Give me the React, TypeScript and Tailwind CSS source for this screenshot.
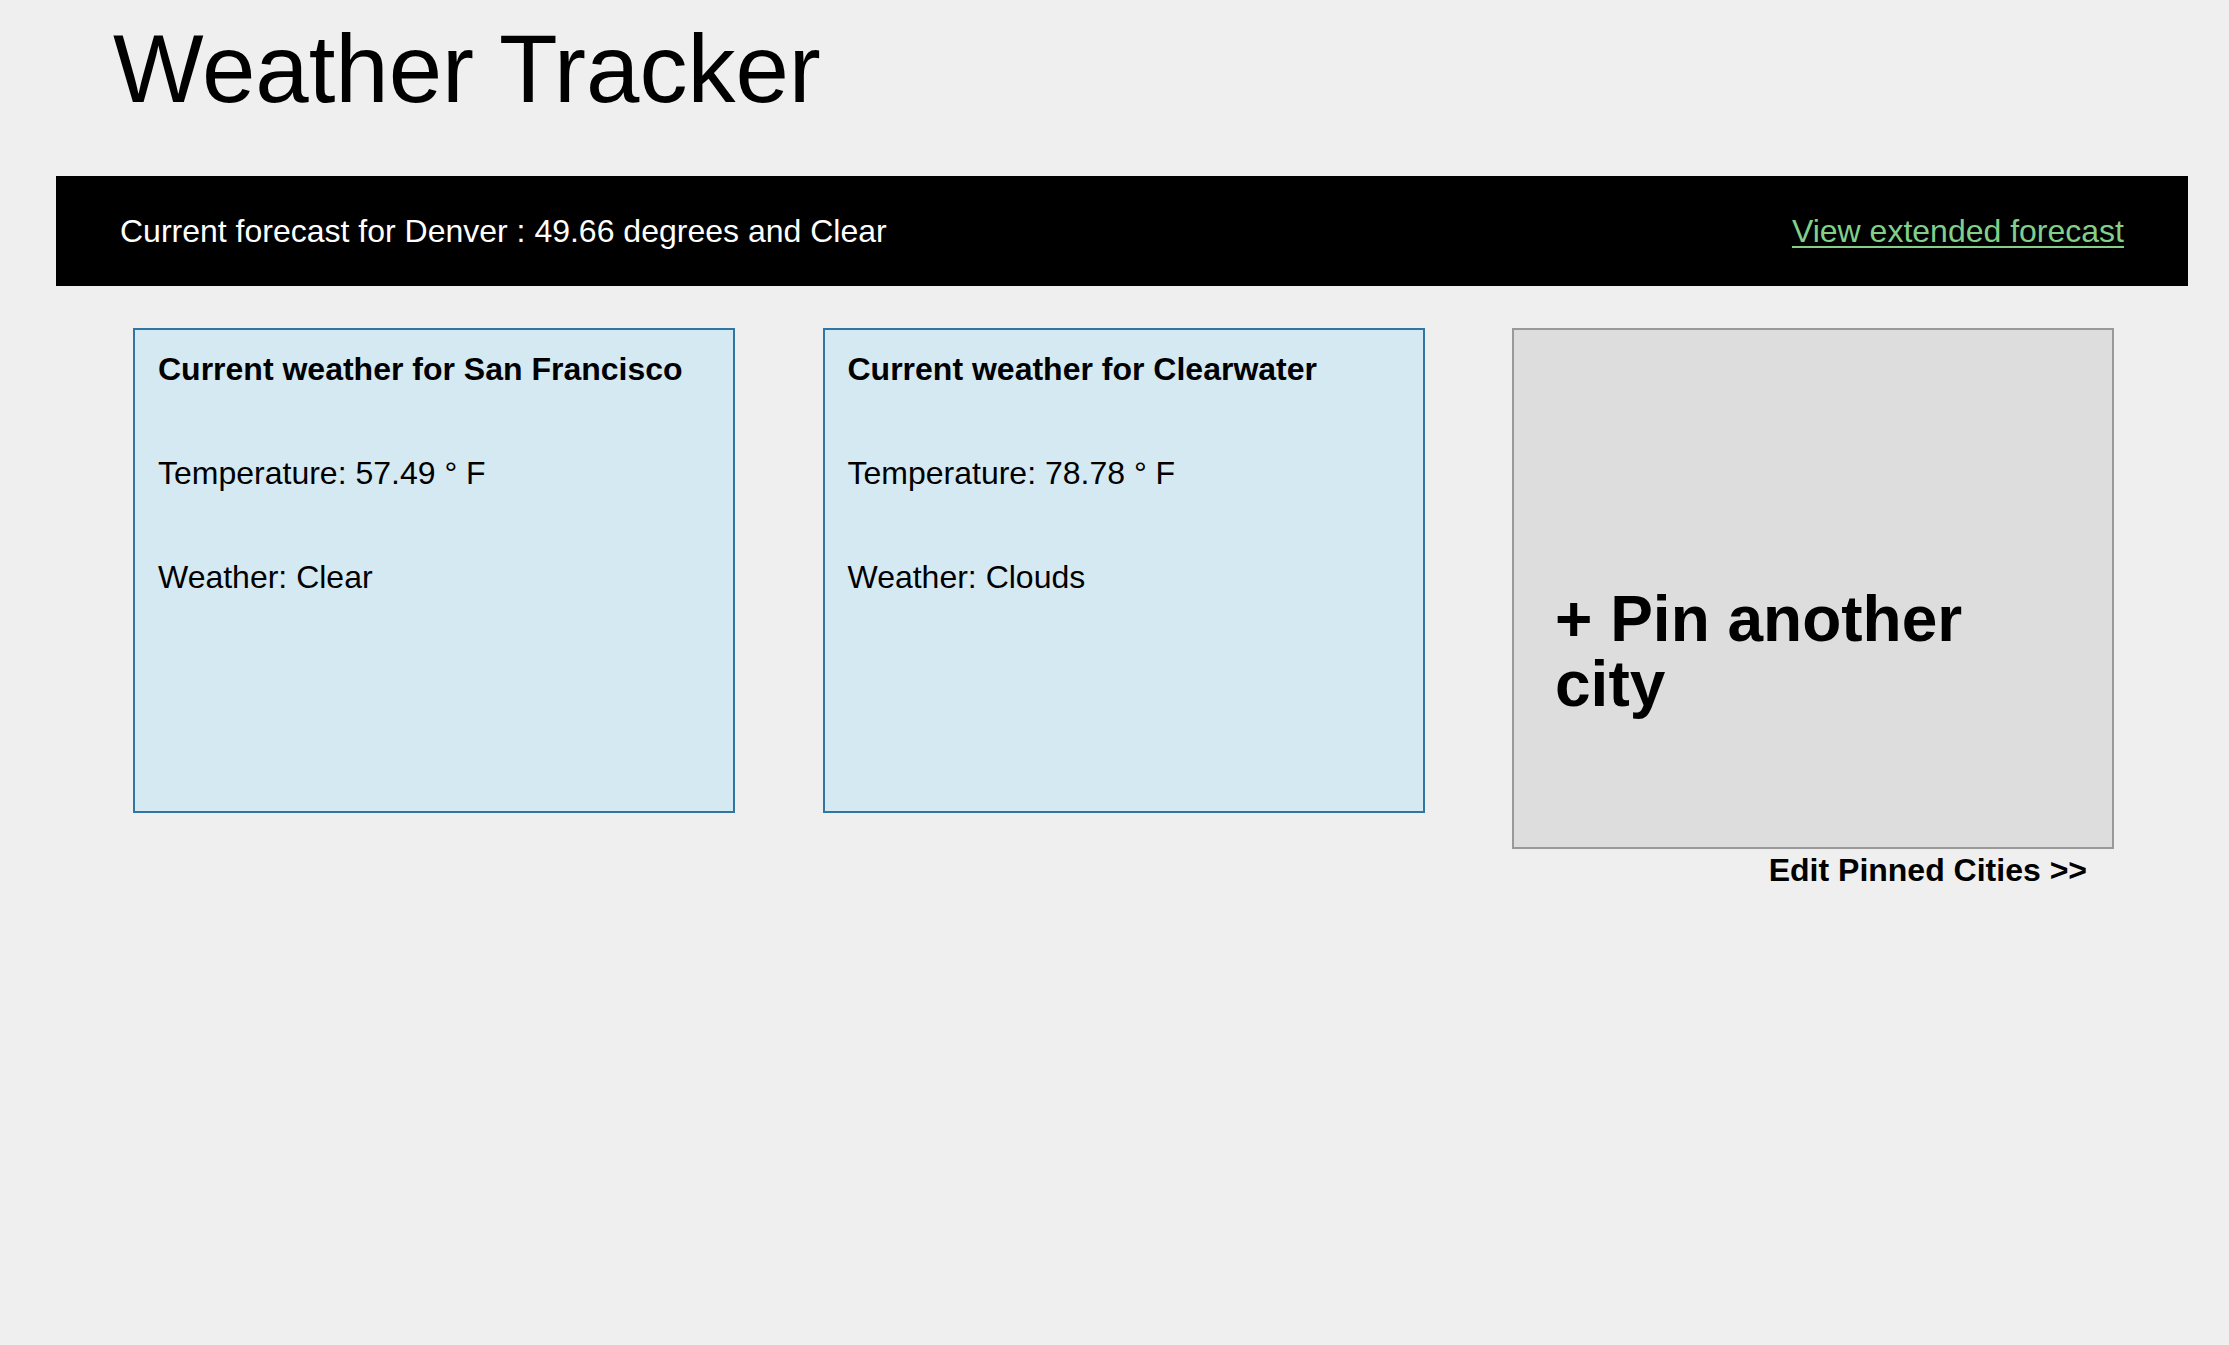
const pinned = [
    {
        city: 'San Francisco',
        temperature: '57.49',
        weather: 'Clear',
    },
    {
        city: 'Clearwater',
        temperature: '78.78',
        weather: 'Clouds',
    },
];

function CityCard({ city, temperature, weather }: (typeof pinned)[number]) {
    return (
        <div className="flex h-[485px] w-[602px] shrink-0 flex-col gap-[68px] border-2 border-[#2f77a2] bg-[#d5e9f2] px-[23px] pt-[21px] text-[32px] leading-[36px] text-black">
            <h3 className="font-bold">Current weather for {city}</h3>
            <p>Temperature: {temperature} ° F</p>
            <p>Weather: {weather}</p>
        </div>
    );
}

export default function App() {
    return (
        <div className="min-h-screen bg-[#efefef] pb-10 font-['Liberation_Sans',Arial,sans-serif] text-black">
            <h1 className="pl-[113px] pt-[21px] text-[96px] font-normal leading-none">
                Weather Tracker
            </h1>

            <div className="ml-[56px] mt-[59px] flex h-[110px] w-[2132px] items-center justify-between bg-black px-16 text-[32px] leading-[36px]">
                <span className="text-white">
                    Current forecast for Denver : 49.66 degrees and Clear
                </span>
                <a
                    href="#"
                    className="text-[#82cf8a] underline decoration-[2px] underline-offset-[4px]"
                >
                    View extended forecast
                </a>
            </div>

            <div className="mt-[42px] flex items-start gap-[87.5px] pl-[133px]">
                {pinned.map((item) => (
                    <CityCard key={item.city} {...item} />
                ))}

                <div className="flex w-[602px] shrink-0 flex-col items-end">
                    <div className="h-[521px] w-full cursor-pointer border-2 border-[#999999] bg-[#dddddd] px-[41px] pt-[257px] text-[64px] font-bold leading-[65px] text-black">
                        + Pin another city
                    </div>
                    <a
                        href="#"
                        className="mt-[3px] pr-[27px] text-[32px] font-bold leading-[36px] text-black"
                    >
                        Edit Pinned Cities &gt;&gt;
                    </a>
                </div>
            </div>
        </div>
    );
}
